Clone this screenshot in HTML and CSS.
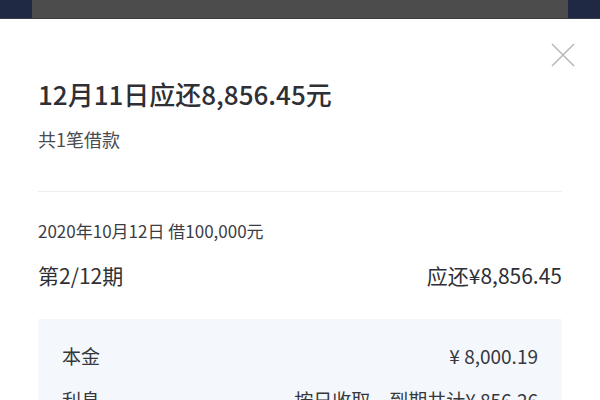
FILE: index.html
```html
<!DOCTYPE html>
<html lang="zh-CN">
<head>
  <meta charset="UTF-8">
  <title>还款详情</title>
  <link rel="stylesheet" href="styles.css">
</head>
<body>

  <div class="topbar">
    <div class="edge"></div>
    <div class="shade"></div>
    <div class="edge"></div>
  </div>

  <div class="sheet">
    <button class="close" aria-label="关闭">
      <svg width="24" height="24" viewBox="0 0 24 24">
        <path d="M1 1 L23 23 M23 1 L1 23" stroke="#b9b9b9" stroke-width="1.6" fill="none"/>
      </svg>
    </button>

    <div class="summary">
      <h1 class="title">12月11日应还8,856.45元</h1>
      <div class="count">共1笔借款</div>
    </div>

    <div class="loan">
      <div class="loan-date">2020年10月12日 借100,000元</div>
      <div class="period">
        <span>第2/12期</span>
        <span>应还¥8,856.45</span>
      </div>
    </div>

    <div class="detail">
      <div class="detail-row">
        <span>本金</span>
        <span>¥ 8,000.19</span>
      </div>
      <div class="detail-row">
        <span>利息</span>
        <span>按日收取，到期共计¥ 856.26</span>
      </div>
    </div>
  </div>

</body>
</html>
```

FILE: styles.css
```css
body, html {
  margin: 0;
  height: 100%;
  overflow: hidden;
  background: #fff;
  font-family: "Noto Sans CJK SC", "Noto Sans", sans-serif;
}

.topbar {
  display: flex;
  height: 18px;
  border-bottom: 1px solid #3a3d44;
}

.edge {
  width: 32px;
  background-color: #1f2943;
}

.shade {
  flex: 1;
  background-color: #4c4c4c;
}

.sheet {
  position: relative;
  padding: 0 38px;
}

.close {
  position: absolute;
  top: 24px;
  right: 25px;
  padding: 0;
  border: none;
  background: none;
  width: 24px;
  height: 24px;
}

.summary {
  padding-top: 57px;
  padding-bottom: 39px;
  border-bottom: 1px solid #eeeeee;
}

.title {
  margin: 0;
  font-size: 26px;
  line-height: 36px;
  font-weight: 500;
  color: #2e3036;
}

.count {
  margin-top: 14px;
  font-size: 18px;
  line-height: 26px;
  color: #4a4c52;
}

.loan {
  padding-top: 26px;
}

.loan-date {
  font-size: 17px;
  line-height: 26px;
  color: #3b3d44;
}

.period {
  display: flex;
  justify-content: space-between;
  margin-top: 16px;
  font-size: 21px;
  line-height: 30px;
  color: #2e3036;
}

.detail {
  margin-top: 29px;
  padding: 23px 24px;
  background-color: #f4f7fc;
}

.detail-row {
  display: flex;
  justify-content: space-between;
  font-size: 19px;
  line-height: 28px;
  color: #35373d;
  margin-bottom: 16px;
}
```
